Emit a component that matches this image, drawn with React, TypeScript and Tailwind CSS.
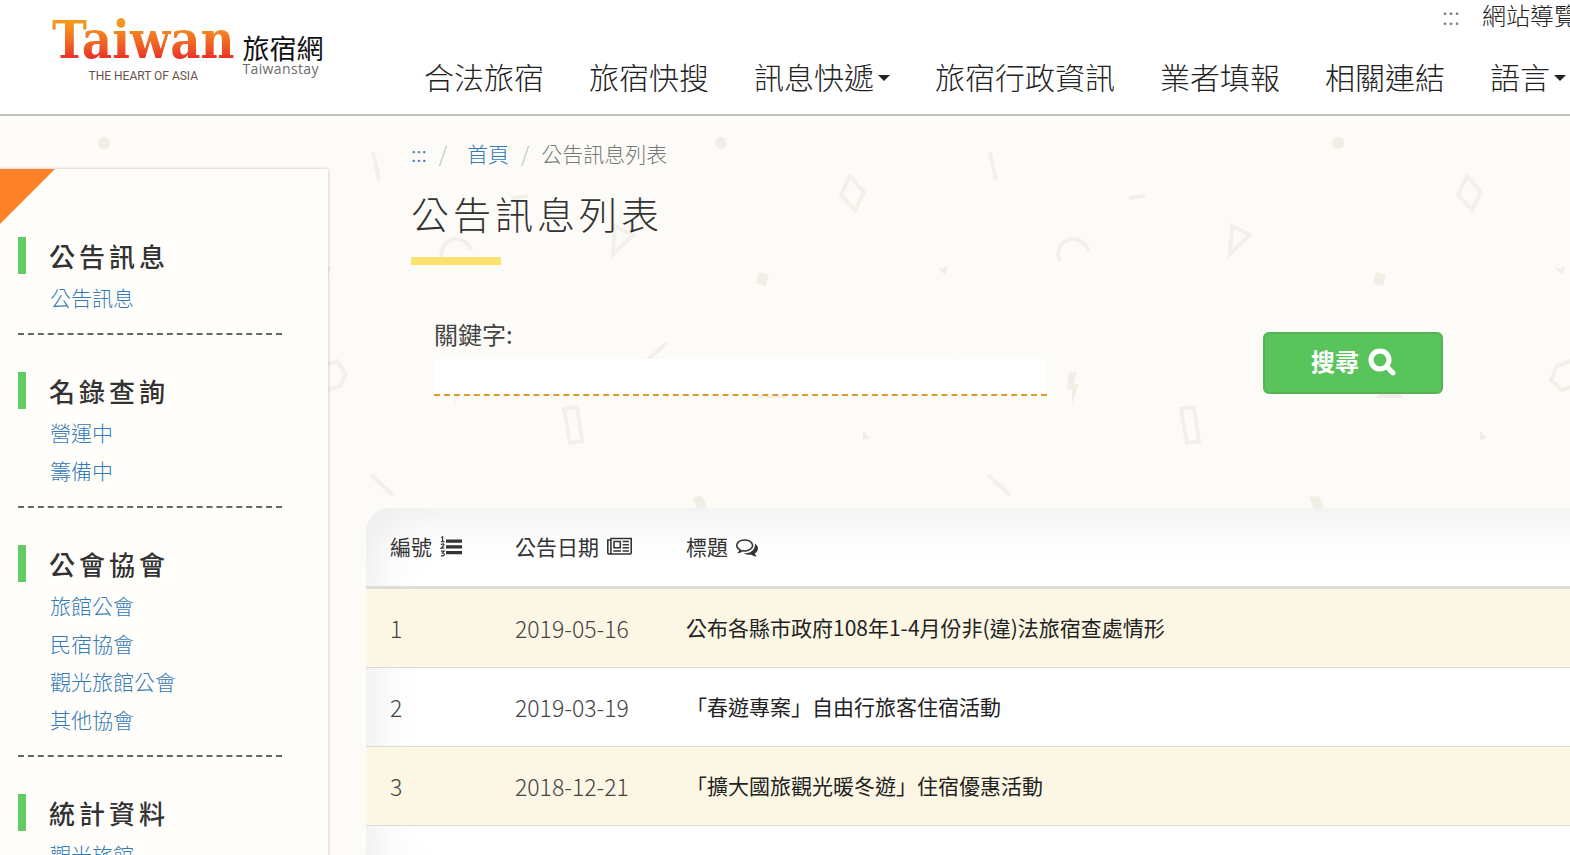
import type { ReactNode } from "react";

interface NavItem {
  label: string;
  dropdown?: boolean;
}

interface MenuSection {
  title: string;
  links: string[];
}

interface Notice {
  id: number;
  date: string;
  title: string;
}

const navItems: NavItem[] = [
  { label: "合法旅宿" },
  { label: "旅宿快搜" },
  { label: "訊息快遞", dropdown: true },
  { label: "旅宿行政資訊" },
  { label: "業者填報" },
  { label: "相關連結" },
  { label: "語言", dropdown: true },
];

const sections: MenuSection[] = [
  { title: "公告訊息", links: ["公告訊息"] },
  { title: "名錄查詢", links: ["營運中", "籌備中"] },
  { title: "公會協會", links: ["旅館公會", "民宿協會", "觀光旅館公會", "其他協會"] },
  { title: "統計資料", links: ["觀光旅館"] },
];

const notices: Notice[] = [
  { id: 1, date: "2019-05-16", title: "公布各縣市政府108年1-4月份非(違)法旅宿查處情形" },
  { id: 2, date: "2019-03-19", title: "「春遊專案」自由行旅客住宿活動" },
  { id: 3, date: "2018-12-21", title: "「擴大國旅觀光暖冬遊」住宿優惠活動" },
];

function SearchIcon() {
  return (
    <svg
      viewBox="0 0 1664 1792"
      className="h-7 w-[26px] overflow-visible"
      fill="currentColor"
      stroke="currentColor"
      strokeWidth="70"
      aria-hidden="true"
    >
      <path d="M1152 832q0-185-131.5-316.5T704 384 387.5 515.5 256 832t131.5 316.5T704 1280t316.5-131.5T1152 832zm512 832q0 52-38 90t-90 38q-54 0-90-38l-343-342q-179 124-399 124-143 0-273.5-55.5t-225-150-150-225T0 832t55.5-273.5 150-225 225-150T704 128t273.5 55.5 225 150 150 225T1408 832q0 220-124 399l343 343q37 37 37 90z" />
    </svg>
  );
}

function ListIcon() {
  return (
    <svg viewBox="0 0 22 22" className="size-[22px]" fill="currentColor" aria-hidden="true">
      <path d="M6 3.5h16v3.2H6zM6 9.2h16v3.2H6zM6 15h16v3.2H6z" />
      <path
        d="M1.2 1.6L2.6.9V5.6M1 5.6h3.4M1 8.6q3-1.6 3 .2 0 .9-3 3.4h3.4M1 15.1h3.2L2.4 17q2 0 2 1.4 0 1.8-3.5 1.3"
        fill="none"
        stroke="currentColor"
        strokeWidth="1.2"
      />
    </svg>
  );
}

function NewspaperIcon() {
  return (
    <svg viewBox="0 0 2048 1792" className="h-[22px] w-[25px]" fill="currentColor" aria-hidden="true">
      <path d="M1024 512H640v384h384V512zM1152 1152v128H512v-128h640zM1152 384v640H512V384h640zm640 768v128h-512v-128h512zm0-256v128h-512V896h512zm0-256v128h-512V640h512zm0-256v128h-512V384h512zM256 1344V384H128v960q0 26 19 45t45 19 45-19 19-45zm1664 0V256H384v1088q0 33-11 64h1483q26 0 45-19t19-45zm128-1216v1216q0 80-56 136t-136 56H192q-80 0-136-56T0 1344V256h256V128h1792z" />
    </svg>
  );
}

function CommentsIcon() {
  return (
    <svg viewBox="0 0 1792 1792" className="size-[22px]" fill="currentColor" aria-hidden="true">
      <path d="M704 384q-153 0-286 52T206.5 577 128 768q0 82 53 158t149 132l97 56-35 84q34-20 62-39l44-31 53 10q78 14 153 14 153 0 286-52t211.5-141T1280 768t-78.5-191T990 436 704 384zm0-128q191 0 353.5 68.5t256.5 186.5 94 257-94 257-256.5 186.5T704 1280q-86 0-176-16-124 88-278 128-36 9-86 16h-3q-11 0-20.5-8t-11.5-21q-1-3-1-6.5t.5-6.5 2-6l2.5-5 3.5-5.5 4-5 4.5-5 4-4.5q5-6 23-25t26-29.5 22.5-29 25-38.5 20.5-44Q142 1104 71 997T0 768q0-139 94-257t256.5-186.5T704 256zm822 1169q10 24 20.5 44t25 38.5 22.5 29 26 29.5 23 25q1 1 4 4.5t4.5 5 4 5 3.5 5.5l2.5 5 2 6 .5 6.5-1 6.5q-3 14-13 22t-22 7q-50-7-86-16-154-40-278-128-90 16-176 16-271 0-472-132 58 4 88 4 161 0 309-45t264-129q125-92 192-212t67-254q0-77-23-152 129 71 204 178t75 230q0 120-71 224.5T1526 1425z" />
    </svg>
  );
}

function Caret() {
  return (
    <svg viewBox="0 0 12 6" className="ml-1 mt-1 h-[6px] w-[12px]" fill="currentColor" aria-hidden="true">
      <path d="M0 0h12L6 6z" />
    </svg>
  );
}

// faint confetti behind the page, repeated every 617px
function Backdrop() {
  return (
    <svg className="absolute inset-0 -z-10 h-full w-full" aria-hidden="true">
      <defs>
        <pattern id="confetti" x="25" y="0" width="617" height="1000" patternUnits="userSpaceOnUse">
          <g transform="translate(-25 -116)" fill="none" stroke="#f3f0e9" strokeWidth="4">
            <path d="M373 152l6 28M512 198l16-2M648 359l19-16M31 359l19-16M371 475l22 20" />
            <path d="M233 176l14 16-9 18-14-15z" />
            <path d="M443 261a15 15 0 1 1 28-10" />
            <path d="M615 226l18 9-20 19z" />
            <path d="M317 380l6-14 14-5 9 13-6 12-12 4z" />
            <path d="M564 409l13-2 5 34-12 2z" />
            <g fill="#f1eee5" stroke="none">
              <circle cx="104" cy="143" r="6" />
              <path d="M142 272l10 3-3 11-10-3z" />
              <path d="M321 268q3-1 5 1 2-3 5-2l-3 8z" />
              <path d="M452 373l8-2-3 13h5l-7 20v-14l-5-1z" />
              <path d="M246 431l7 7-7 2z" />
              <path d="M75 497l10-1 5 11-10 2z" />
              <path d="M141 398q14-16 29 0z" />
            </g>
          </g>
        </pattern>
      </defs>
      <rect width="100%" height="100%" fill="url(#confetti)" />
    </svg>
  );
}

function Logo() {
  return (
    <a href="#" className="flex w-[424px] shrink-0 pl-[52px] pt-3">
      <div className="flex flex-col items-center">
        <span className="bg-linear-to-b from-[#f5981e] from-20% to-[#ea3527] to-80% bg-clip-text font-['DejaVu_Serif_Condensed','DejaVu_Serif','Liberation_Serif',serif] text-[52px] leading-14 font-bold text-transparent">
          Taiwan
        </span>
        <span className="font-[Roboto,sans-serif] text-xs leading-4 text-[#6b514a]">THE HEART OF ASIA</span>
      </div>
      <div className="ml-2 flex flex-col pt-[22px] text-[#111]">
        <span className="text-[27px] leading-7">旅宿網</span>
        <span className="font-['Open_Sans',sans-serif] text-sm leading-3.5 tracking-wide text-[#6d6d6d]">Taiwanstay</span>
      </div>
    </a>
  );
}

function Header() {
  return (
    <header className="flex h-[116px] border-b-2 border-[#c3c2bb] bg-white">
      <Logo />
      <div className="min-w-0 flex-1">
        <div className="-mr-2 flex justify-end gap-[22px] text-2xl leading-[30px] font-light text-[#222]">
          <a href="#" className="text-[#777]">:::</a>
          <a href="#" className="whitespace-nowrap">網站導覽</a>
        </div>
        <nav className="mt-6 flex gap-[45px]">
          {navItems.map((item) => (
            <a
              key={item.label}
              href="#"
              className="flex shrink-0 items-center text-[30px] leading-[44px] font-light whitespace-nowrap text-[#222]"
            >
              {item.label}
              {item.dropdown && <Caret />}
            </a>
          ))}
        </nav>
      </div>
    </header>
  );
}

function Sidebar() {
  return (
    <aside className="mt-[53px] w-[328px] shrink-0 bg-[#fffefb] shadow-[0_0_3px_rgba(0,0,0,0.25)]">
      <svg viewBox="0 0 56 56" className="size-14" aria-hidden="true">
        <path d="M0 0h55L0 55z" fill="#ff8229" />
      </svg>
      <div className="mt-3 pr-[46px] pl-[18px]">
        {sections.map((section) => (
          <section key={section.title} className="mb-[37px] border-b-2 border-dashed border-[#666] pb-[17px]">
            <h2 className="mb-1 border-l-8 border-[#62cb65] pl-[23px] text-[26px] leading-[37px] font-medium tracking-[4px] text-[#333]">
              {section.title}
            </h2>
            <ul className="pl-8">
              {section.links.map((link) => (
                <li key={link}>
                  <a href="#" className="block text-[21px] leading-[38px] font-light text-[#337ab7]">
                    {link}
                  </a>
                </li>
              ))}
            </ul>
          </section>
        ))}
      </div>
    </aside>
  );
}

function SearchForm() {
  return (
    <form className="mt-[52px] flex items-start pl-[23px]" onSubmit={(e) => e.preventDefault()}>
      <div className="flex-1">
        <label htmlFor="keyword" className="block text-2xl leading-[34px] text-[#444]">
          關鍵字:
        </label>
        <input
          id="keyword"
          type="text"
          className="mt-2 block h-[37px] w-full border-b-2 border-dashed border-[#e0992f] bg-white px-3 text-xl outline-none"
        />
      </div>
      <button
        type="submit"
        className="mt-[15px] mr-[127px] ml-[216px] flex h-[62px] w-[180px] items-center justify-center gap-2.5 rounded-md border-2 border-[#54b257] bg-[#59c45c] pb-1 text-2xl font-bold text-white"
      >
        搜尋
        <SearchIcon />
      </button>
    </form>
  );
}

function HeadCell({ label, icon }: { label: string; icon: ReactNode }) {
  return (
    <th scope="col" className="h-[81px] border-b-3 border-[#dddcd8] px-6 text-left font-normal">
      <span className="flex items-center gap-2 text-[21px] text-[#333]">
        {label}
        {icon}
      </span>
    </th>
  );
}

function NoticeTable() {
  return (
    <div className="mt-28 -mr-20 min-h-[400px] overflow-hidden rounded-3xl bg-white shadow-[inset_0_0_60px_rgba(0,0,0,0.1)]">
      <table className="w-full table-fixed border-separate border-spacing-0">
        <colgroup>
          <col className="w-[125px]" />
          <col className="w-[171px]" />
          <col />
        </colgroup>
        <thead>
          <tr>
            <HeadCell label="編號" icon={<ListIcon />} />
            <HeadCell label="公告日期" icon={<NewspaperIcon />} />
            <HeadCell label="標題" icon={<CommentsIcon />} />
          </tr>
        </thead>
        <tbody>
          {notices.map((notice) => (
            <tr key={notice.id} className="text-[#444] odd:bg-[#fcf7e4]">
              <td className="h-[79px] border-b border-[#ddddd0] px-6 text-[23px] font-light">{notice.id}</td>
              <td className="border-b border-[#ddddd0] px-6 text-[23px] font-light whitespace-nowrap">{notice.date}</td>
              <td className="border-b border-[#ddddd0] px-6 text-[21px]">
                <a href="#" className="text-[#222]">{notice.title}</a>
              </td>
            </tr>
          ))}
        </tbody>
      </table>
    </div>
  );
}

export default function App() {
  return (
    <div className="flex h-screen flex-col overflow-hidden bg-[#fdfbf7] font-['Noto_Sans_CJK_TC',sans-serif]">
      <div className="shrink-0">
        <Header />
      </div>
      <div className="relative isolate flex flex-1">
        <Backdrop />
        <Sidebar />
        <main className="ml-[38px] min-w-0 flex-1">
          <div className="pt-[22px] pl-[45px]">
            <nav aria-label="breadcrumb" className="flex text-[21px] leading-[30px] font-light text-[#777]">
              <a href="#" className="text-[#337ab7]">:::</a>
              <span className="px-3 text-[#bbb]">/</span>
              <a href="#" className="pl-2 text-[#337ab7]">首頁</a>
              <span className="px-3 text-[#bbb]">/</span>
              <span>公告訊息列表</span>
            </nav>
            <h1 className="mt-[21px] text-[38px] leading-[48px] font-light tracking-[4px] text-[#333]">公告訊息列表</h1>
            <div className="mt-5 h-2 w-[90px] bg-[#fae170]" />
            <SearchForm />
          </div>
          <NoticeTable />
        </main>
      </div>
    </div>
  );
}
